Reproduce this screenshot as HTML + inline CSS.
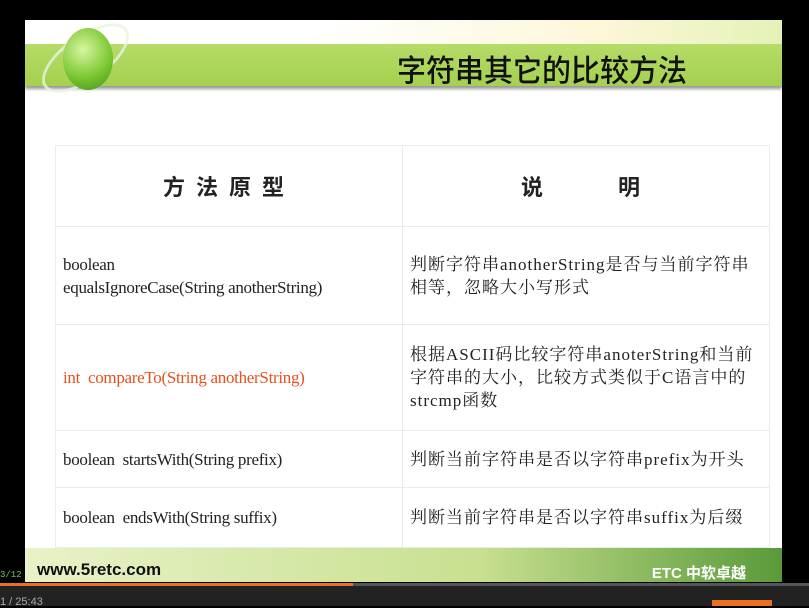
<!DOCTYPE html>
<html><head><meta charset="utf-8"><style>
body{margin:0;width:809px;height:606px;background:#000;position:relative;overflow:hidden;font-family:"Liberation Serif","Noto Serif CJK SC",serif}
.slide{position:absolute;left:25px;top:20px;width:757px;height:562px;background:#fff;overflow:hidden}
.band{position:absolute;left:0;top:24px;width:757px;height:42px;background:linear-gradient(#b5dc68,#a5d04e);box-shadow:0 3px 3px #999}
.glow{position:absolute;left:300px;top:0;width:457px;height:24px;background:linear-gradient(90deg,#fff,#fdf7d8 60%,#e4f2b8)}
.title{position:absolute;left:372px;top:28px;font:29px "Noto Sans CJK SC",sans-serif;color:#111;font-weight:500;transform:scaleY(1.05)}
.globe{position:absolute;left:38px;top:8px;width:50px;height:62px;border-radius:50%;background:radial-gradient(circle at 40% 35%,#d8f5a0,#7cc832 55%,#3e8e14);}
.ring{position:absolute;left:10px;top:15px;width:95px;height:40px;border:3px solid #e8f2e0;border-radius:50%;transform:rotate(-35deg);opacity:.8}
table{position:absolute;left:30px;top:125px;width:715px;border-collapse:collapse;font-size:17px;color:#222;table-layout:fixed}
td{border:1px solid #e4eef2;padding:0 7px;vertical-align:middle;line-height:23px;letter-spacing:-0.3px;white-space:nowrap}
td+td{letter-spacing:1px}
th{border:1px solid #e4eef2;font:bold 22px "Noto Sans CJK SC",sans-serif;letter-spacing:11px;height:78px}
.bot{position:absolute;left:0;top:528px;width:757px;height:34px;background:linear-gradient(90deg,#e8f2c8,#c8e090 60%,#5a9a3a)}
.url{position:absolute;left:12px;top:12px;font:bold 17px "Liberation Sans",sans-serif;color:#111}
.etc{position:absolute;right:36px;top:14px;font:bold 15px "Liberation Sans","Noto Sans CJK SC",sans-serif;color:#fff}
</style></head><body>
<div class="slide">
<div class="glow"></div>
<div class="band"></div>
<div class="ring"></div><div class="globe"></div>
<div class="title">字符串其它的比较方法</div>
<table>
<tr><th style="width:344px">方法原型</th><th>说&nbsp;&nbsp;&nbsp; 明</th></tr>
<tr style="height:98px"><td>boolean<br>equalsIgnoreCase(String anotherString)</td><td>判断字符串anotherString是否与当前字符串<br>相等，忽略大小写形式</td></tr>
<tr style="height:106px"><td style="color:#e8501e">int&nbsp; compareTo(String anotherString)</td><td>根据ASCII码比较字符串anoterString和当前<br>字符串的大小，比较方式类似于C语言中的<br>strcmp函数</td></tr>
<tr style="height:57px"><td>boolean&nbsp; startsWith(String prefix)</td><td>判断当前字符串是否以字符串prefix为开头</td></tr>
<tr style="height:60px"><td>boolean&nbsp; endsWith(String suffix)</td><td>判断当前字符串是否以字符串suffix为后缀</td></tr>
</table>
<div class="bot"><div class="url">www.5retc.com</div><div class="etc">ETC 中软卓越</div></div>
</div>
<div style="position:absolute;left:0;top:583px;width:809px;height:3px;background:#555"></div>
<div style="position:absolute;left:0;top:583px;width:353px;height:3px;background:#e8701e"></div>
<div style="position:absolute;left:0;top:586px;width:809px;height:20px;background:#222"></div>
<div style="position:absolute;left:0;top:596px;font:11px 'Liberation Sans',sans-serif;color:#aaa">1 / 25:43</div>
<div style="position:absolute;left:712px;top:600px;width:60px;height:6px;background:#e8701e"></div>
<div style="position:absolute;left:0;top:570px;font:9px 'Liberation Mono',monospace;color:#6c6">3/12</div>
</body></html>
